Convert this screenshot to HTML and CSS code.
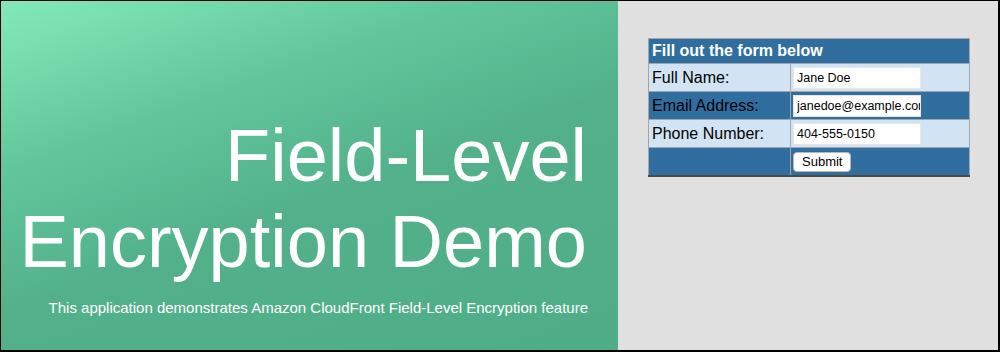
FILE: index.html
```html
<!DOCTYPE html>
<html>
<head>
<meta charset="utf-8">
<link rel="stylesheet" href="styles.css">
</head>
<body>
<div class="frame">
  <section class="hero">
    <h1 class="title">Field-Level<br>Encryption Demo</h1>
    <p class="subtitle">This application demonstrates Amazon CloudFront Field-Level Encryption feature</p>
  </section>
  <section class="side">
    <table class="form-table">
      <tr class="head"><th colspan="2">Fill out the form below</th></tr>
      <tr class="light"><td class="label">Full Name:</td><td class="field"><input type="text" value="Jane Doe"></td></tr>
      <tr class="dark"><td class="label">Email Address:</td><td class="field"><input type="text" value="janedoe@example.com"></td></tr>
      <tr class="light"><td class="label">Phone Number:</td><td class="field"><input type="text" value="404-555-0150"></td></tr>
      <tr class="dark last"><td class="label"></td><td class="field"><button type="button">Submit</button></td></tr>
    </table>
  </section>
</div>
</body>
</html>
```

FILE: styles.css
```css
html, body {
  margin: 0;
  padding: 0;
}
body {
  font-family: "Liberation Sans", Arial, sans-serif;
  width: 1000px;
  height: 352px;
  overflow: hidden;
}
.frame {
  box-sizing: border-box;
  width: 1000px;
  height: 352px;
  border-top: 1px solid #000;
  border-left: 1px solid #000;
  border-right: 2px solid #000;
  border-bottom: 2px solid #000;
  display: flex;
}
.hero {
  width: 617px;
  flex: none;
  background: linear-gradient(160deg, #84e9b9 0%, #62c69c 30%, #52b18b 55%, #4fae88 100%);
  display: flex;
  flex-direction: column;
  align-items: flex-end;
  padding: 112px 31px 0 0;
  box-sizing: border-box;
  color: #fff;
}
.title {
  margin: 0;
  font-weight: normal;
  font-size: 74px;
  line-height: 86px;
  text-align: right;
}
.subtitle {
  margin: 14px -1px 0 0;
  font-size: 15px;
  text-align: right;
}
.side {
  flex: 1;
  background: #e0e0e0;
  padding: 37px 0 0 30px;
}
.form-table {
  border-collapse: collapse;
  font-size: 16px;
}
.form-table th {
  background: #306ea0;
  color: #fff;
  text-align: left;
  font-weight: bold;
  height: 24px;
  padding: 0 3px;
  border: 1px solid #a0a6ad;
}
.form-table td {
  border: 1px solid #a0a6ad;
  height: 27px;
  padding: 0;
}
.form-table tr.last td {
  border-bottom: 2px solid #4a4a4a;
}
.light td { background: #d2e4f4; }
.dark td { background: #306ea0; }
.label {
  width: 138px;
  padding: 0 0 0 3px !important;
  color: #000;
}
.field {
  width: 176px;
  padding: 0 0 0 2px !important;
}
.field input {
  box-sizing: border-box;
  width: 128px;
  height: 22px;
  border: 1px solid #e6e6e6;
  background: #fff;
  font-family: "Liberation Sans", Arial, sans-serif;
  font-size: 12.5px;
  padding: 0 0 0 3px;
  margin: 0;
  display: block;
}
.field button {
  display: block;
  font-family: "Liberation Sans", Arial, sans-serif;
  font-size: 13px;
  background: #fff;
  border: 1px solid #b8b8b8;
  border-radius: 4px;
  height: 20px;
  padding: 0 8px;
  margin: 0;
}
```
